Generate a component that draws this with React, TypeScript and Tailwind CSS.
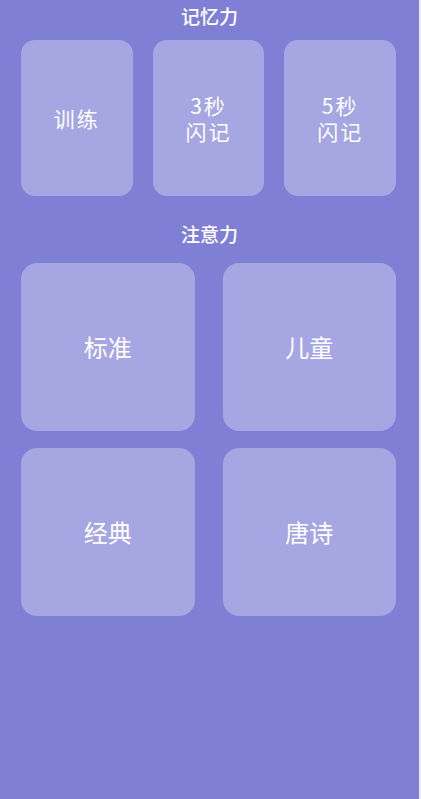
import React from 'react';

const memory = [['训练'], ['3秒', '闪记'], ['5秒', '闪记']];
const attention = ['标准', '儿童', '经典', '唐诗'];

export default function App() {
  return (
    <div
      className="min-h-[799px] w-[421px] flex bg-[#ecebf8]"
      style={{ fontFamily: '"Noto Sans CJK SC", "Noto Sans", sans-serif' }}
    >
      <div className="w-[419px] min-h-[799px] bg-[#7f7fd5] px-[21px] text-white">
        {/* 记忆力 */}
        <div className="pt-[4px] h-[28px] text-center text-[19px] leading-[24px] font-medium">记忆力</div>
        <div className="mt-[12px] grid grid-cols-3 gap-x-[20px] pr-[2px]">
          {memory.map((lines, i) => (
            <div
              key={i}
              className="h-[156px] rounded-[14px] bg-[#a6a6e3] flex items-center justify-center"
            >
              <p className="text-center text-[21px] leading-[26px] tracking-[2px]">
                {lines.map((l, j) => (
                  <React.Fragment key={j}>
                    {j > 0 && <br />}
                    {l}
                  </React.Fragment>
                ))}
              </p>
            </div>
          ))}
        </div>

        {/* 注意力 */}
        <div className="mt-[26px] h-[24px] text-center text-[19px] leading-[24px] font-medium">注意力</div>
        <div className="mt-[17px] grid grid-cols-2 gap-x-[28px] gap-y-[17px] pr-[2px]">
          {attention.map((t) => (
            <div
              key={t}
              className="h-[168px] rounded-[16px] bg-[#a6a6e3] flex items-center justify-center text-[24px] leading-[30px]"
            >
              {t}
            </div>
          ))}
        </div>
      </div>
    </div>
  );
}
